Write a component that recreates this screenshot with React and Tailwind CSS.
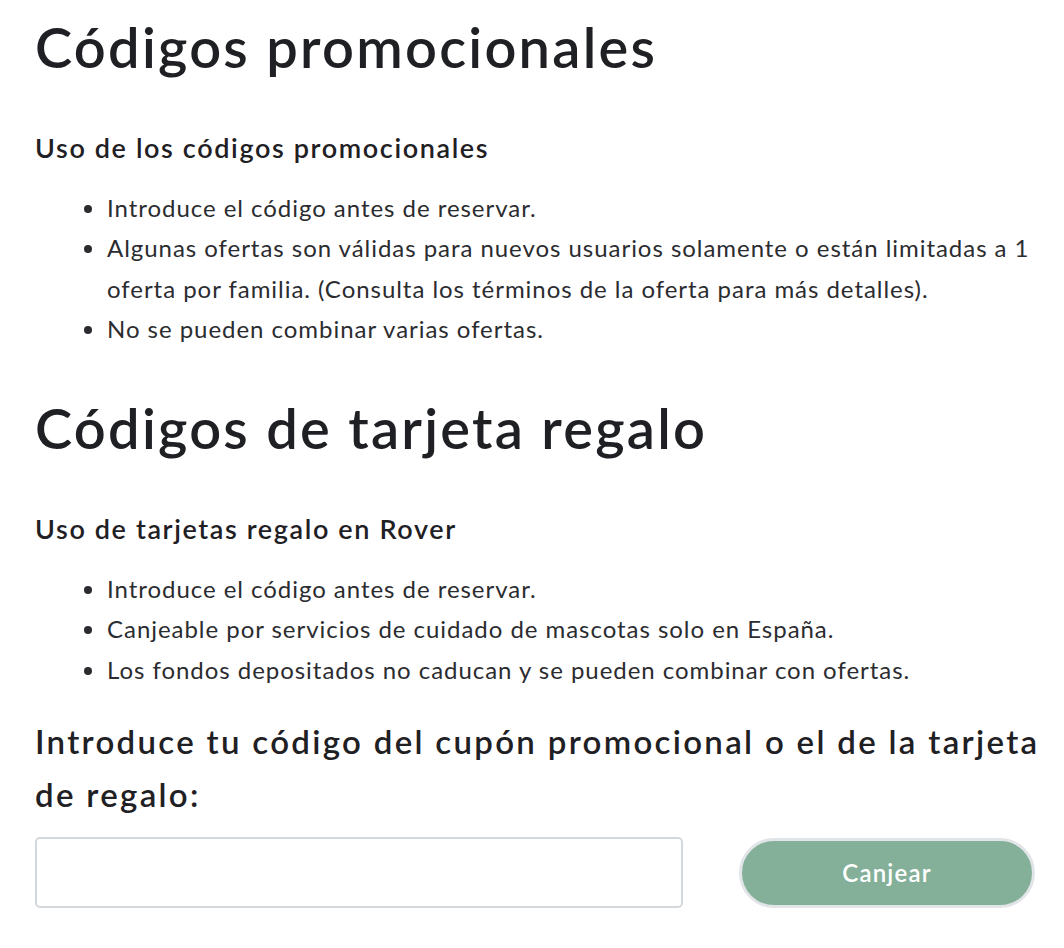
import React from "react";

const font = { fontFamily: "Lato, 'Noto Sans', sans-serif" };

const promoRules = [
  "Introduce el código antes de reservar.",
  "Algunas ofertas son válidas para nuevos usuarios solamente o están limitadas a 1 oferta por familia. (Consulta los términos de la oferta para más detalles).",
  "No se pueden combinar varias ofertas.",
];

const giftRules = [
  "Introduce el código antes de reservar.",
  "Canjeable por servicios de cuidado de mascotas solo en España.",
  "Los fondos depositados no caducan y se pueden combinar con ofertas.",
];

const RuleList = ({ items }) => (
  <ul className="list-disc pl-[72px] text-[24px] tracking-[0.04em] leading-[40.5px] text-[#2b2c30]">
    {items.map((item) => (
      <li key={item}>{item}</li>
    ))}
  </ul>
);

export default function App() {
  return (
    <div className="bg-white min-h-[948px] pl-[35px] pr-[28px] text-[#1f2024]" style={font}>
      <h1 className="text-[56px] font-semibold leading-none tracking-[0.04em] pt-[19px]">
        Códigos promocionales
      </h1>
      <h2 className="text-[27px] font-semibold tracking-[0.06em] mt-[56px] leading-tight">
        Uso de los códigos promocionales
      </h2>
      <div className="mt-[23px]">
        <RuleList items={promoRules} />
      </div>

      <h1 className="text-[56px] font-semibold leading-none tracking-[0.04em] mt-[50px]">
        Códigos de tarjeta regalo
      </h1>
      <h2 className="text-[27px] font-semibold tracking-[0.06em] mt-[56px] leading-tight">
        Uso de tarjetas regalo en Rover
      </h2>
      <div className="mt-[23px]">
        <RuleList items={giftRules} />
      </div>

      <h3 className="text-[33px] font-semibold leading-[53px] tracking-[0.07em] mt-[25px] whitespace-nowrap">
        Introduce tu código del cupón promocional o el de la tarjeta
        <br />
        de regalo:
      </h3>

      <div className="flex items-center gap-[56px] mt-[16px]">
        <input
          type="text"
          className="w-[648px] h-[71px] border-2 border-[#d3d8dd] rounded-[5px] px-4 text-[22px] outline-none"
        />
        <button className="w-[296px] h-[70px] rounded-full bg-[#84b09a] border-[3px] border-[#e2e5e8] text-white text-[24px] tracking-[0.05em] font-semibold">
          Canjear
        </button>
      </div>
    </div>
  );
}
